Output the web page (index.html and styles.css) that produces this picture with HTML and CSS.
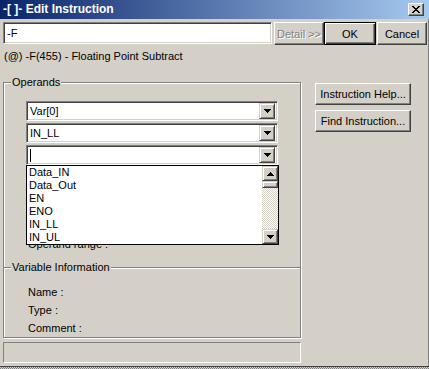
FILE: index.html
```html
<!DOCTYPE html>
<html>
<head>
<meta charset="utf-8">
<title>Edit Instruction</title>
<link rel="stylesheet" href="styles.css">
</head>
<body>
<div class="window">
  <div class="titlebar">
    <span class="title">-[ ]- Edit Instruction</span>
    <span class="close"><svg width="8" height="7" viewBox="0 0 8 7" shape-rendering="crispEdges"><path d="M0 0h2v1H0zM6 0h2v1H6zM1 1h2v1H1zM5 1h2v1H5zM2 2h4v1H2zM3 3h2v1H3zM2 4h4v1H2zM1 5h2v1H1zM5 5h2v1H5zM0 6h2v1H0zM6 6h2v1H6z" fill="#000"/></svg></span>
  </div>
  <div class="client">
    <div class="toprow">
      <div class="field">-F</div>
      <div class="btn disabled detail">Detail &gt;&gt;</div>
      <div class="btn default ok">OK</div>
      <div class="btn cancel">Cancel</div>
    </div>
    <div class="desc">(@) -F(455) - Floating Point Subtract</div>
    <div class="main">
      <div class="leftcol">
        <fieldset class="group operands">
          <legend>Operands</legend>
          <div class="combos">
            <div class="combo"><span class="cval">Var[0]</span><span class="dropbtn"><svg width="7" height="4" viewBox="0 0 7 4" shape-rendering="crispEdges"><path d="M0 0h7v1H0zM1 1h5v1H1zM2 2h3v1H2zM3 3h1v1H3z" fill="#000"/></svg></span></div>
            <div class="combo"><span class="cval">IN_LL</span><span class="dropbtn"><svg width="7" height="4" viewBox="0 0 7 4" shape-rendering="crispEdges"><path d="M0 0h7v1H0zM1 1h5v1H1zM2 2h3v1H2zM3 3h1v1H3z" fill="#000"/></svg></span></div>
            <div class="combo open"><span class="cval"><span class="caret"></span></span><span class="dropbtn"><svg width="7" height="4" viewBox="0 0 7 4" shape-rendering="crispEdges"><path d="M0 0h7v1H0zM1 1h5v1H1zM2 2h3v1H2zM3 3h1v1H3z" fill="#000"/></svg></span>
              <div class="droplist">
                <ul class="items">
                  <li>Data_IN</li>
                  <li>Data_Out</li>
                  <li>EN</li>
                  <li>ENO</li>
                  <li>IN_LL</li>
                  <li>IN_UL</li>
                </ul>
                <div class="vscroll">
                  <span class="sbtn"><svg width="7" height="4" viewBox="0 0 7 4" shape-rendering="crispEdges"><path d="M3 0h1v1H3zM2 1h3v1H2zM1 2h5v1H1zM0 3h7v1H0z" fill="#000"/></svg></span>
                  <span class="thumb"></span>
                  <span class="track"></span>
                  <span class="sbtn"><svg width="7" height="4" viewBox="0 0 7 4" shape-rendering="crispEdges"><path d="M0 0h7v1H0zM1 1h5v1H1zM2 2h3v1H2zM3 3h1v1H3z" fill="#000"/></svg></span>
                </div>
              </div>
            </div>
          </div>
          <div class="range">Operand range :</div>
          <fieldset class="group varinfo">
            <legend>Variable Information</legend>
            <div class="vrow">Name :</div>
            <div class="vrow">Type :</div>
            <div class="vrow">Comment :</div>
          </fieldset>
        </fieldset>
        <div class="status"></div>
      </div>
      <div class="rightcol">
        <div class="btn side">Instruction Help...</div>
        <div class="btn side">Find Instruction...</div>
      </div>
    </div>
  </div>
  <div class="bottomedge"></div>
</div>
</body>
</html>
```

FILE: styles.css
```css
* { box-sizing: border-box; }
html, body { margin: 0; padding: 0; }
body {
  width: 429px;
  height: 369px;
  overflow: hidden;
  background: #d4d0c8;
  font-family: "Liberation Sans", Arial, sans-serif;
  font-size: 11px;
  color: #000;
}
.window {
  height: 369px;
  display: flex;
  flex-direction: column;
}
.titlebar {
  height: 19px;
  flex: none;
  display: flex;
  align-items: center;
  justify-content: space-between;
  padding: 0 5px 0 3px;
  background: linear-gradient(to right, #0a246a, #a6caf0);
}
.title {
  color: #fff;
  font-weight: bold;
  font-size: 12px;
  line-height: 19px;
  white-space: pre;
}
.close {
  width: 16px;
  height: 13px;
  display: flex;
  align-items: center;
  justify-content: center;
  background: #d4d0c8;
  border: 1px solid;
  border-color: #fff #404040 #404040 #fff;
  box-shadow: inset -1px -1px #808080;
}
.client {
  flex: 1;
  border-right: 1px solid #808080;
  padding-left: 3px;
}
.toprow {
  display: flex;
  margin-top: 3px;
  height: 23px;
}
.field {
  width: 269px;
  height: 22px;
  background: #fff;
  border: 1px solid;
  border-color: #808080 #fff #fff #808080;
  box-shadow: inset 1px 1px #404040, inset -1px -1px #d4d0c8;
  padding: 0 3px;
  line-height: 20px;
}
.btn {
  height: 23px;
  display: flex;
  align-items: center;
  justify-content: center;
  background: #d4d0c8;
  border: 1px solid;
  border-color: #fff #404040 #404040 #fff;
  box-shadow: inset -1px -1px #808080;
  white-space: nowrap;
}
.detail { width: 50px; margin-left: 2px; }
.ok { width: 52px; }
.cancel { width: 50px; margin-left: 1px; }
.btn.default {
  border: 1px solid #000;
  box-shadow: inset 1px 1px #fff, inset -1px -1px #404040, inset -2px -2px #808080;
}
.btn.disabled {
  color: #808080;
  text-shadow: 1px 1px 0 #fff;
}
.desc {
  margin-top: 5px;
  line-height: 13px;
  height: 13px;
  padding-left: 1px;
}
.main {
  display: flex;
  margin-top: 13px;
}
.leftcol {
  width: 298px;
  flex: none;
}
.group {
  margin: 0;
  padding: 0;
  min-width: 0;
  border: 1px solid #808080;
  box-shadow: inset 1px 1px #fff, 1px 1px 0 #fff;
}
.group legend {
  margin-left: 7px;
  padding: 0 1px 0 1px;
  line-height: 13px;
  background: #d4d0c8;
}
.combos {
  padding: 12px 0 0 22px;
  display: flex;
  flex-direction: column;
  gap: 2px;
}
.combo {
  position: relative;
  width: 252px;
  height: 20px;
  display: flex;
  align-items: center;
  background: #fff;
  border: 1px solid;
  border-color: #808080 #fff #fff #808080;
  box-shadow: inset 1px 1px #404040, inset -1px -1px #d4d0c8;
  padding: 1px 2px 1px 1px;
}
.cval {
  flex: 1;
  padding-left: 2px;
  line-height: 16px;
  display: flex;
  align-items: center;
}
.caret {
  display: block;
  width: 1px;
  height: 13px;
  background: #000;
}
.dropbtn {
  width: 16px;
  height: 16px;
  display: flex;
  align-items: center;
  justify-content: center;
  background: #d4d0c8;
  border: 1px solid;
  border-color: #d4d0c8 #404040 #404040 #d4d0c8;
  box-shadow: inset 1px 1px #fff, inset -1px -1px #808080;
}
.droplist {
  position: absolute;
  left: -1px;
  top: 19px;
  width: 253px;
  height: 80px;
  background: #fff;
  border: 1px solid #000;
  display: flex;
  z-index: 2;
}
.items {
  list-style: none;
  margin: 0;
  padding: 0;
  flex: 1;
}
.items li {
  line-height: 13px;
  height: 13px;
  padding-left: 2px;
}
.vscroll {
  width: 16px;
  display: flex;
  flex-direction: column;
}
.sbtn {
  height: 15px;
  flex: none;
  display: flex;
  align-items: center;
  justify-content: center;
  background: #d4d0c8;
  border: 1px solid;
  border-color: #d4d0c8 #404040 #404040 #d4d0c8;
  box-shadow: inset 1px 1px #fff, inset -1px -1px #808080;
}
.thumb {
  height: 7px;
  flex: none;
  background: #d4d0c8;
  border: 1px solid;
  border-color: #d4d0c8 #404040 #404040 #d4d0c8;
  box-shadow: inset 1px 1px #fff, inset -1px -1px #808080;
}
.track {
  flex: 1;
  background: repeating-conic-gradient(#fff 0 25%, #d4d0c8 0 50%) 0 0 / 2px 2px;
}
.range {
  margin-top: 73px;
  padding-left: 24px;
  line-height: 13px;
}
.varinfo {
  margin-top: 10px;
  border-left: none;
  border-right: none;
  border-bottom: none;
  box-shadow: inset 0 1px #fff;
  padding: 9px 0 0 0;
}
.vrow {
  line-height: 18px;
  height: 18px;
  padding-left: 24px;
}
.status {
  margin-top: 4px;
  height: 21px;
  width: 298px;
  border: 1px solid;
  border-color: #808080 #fff #fff #808080;
}
.rightcol {
  margin-left: 14px;
  padding-top: 7px;
  display: flex;
  flex-direction: column;
  gap: 5px;
}
.side {
  width: 96px;
  height: 22px;
}
.bottomedge {
  height: 3px;
  flex: none;
  border-top: 1px solid #404040;
  background: repeating-conic-gradient(#808080 0 25%, #d4d0c8 0 50%) 0 0 / 2px 2px;
}
```
